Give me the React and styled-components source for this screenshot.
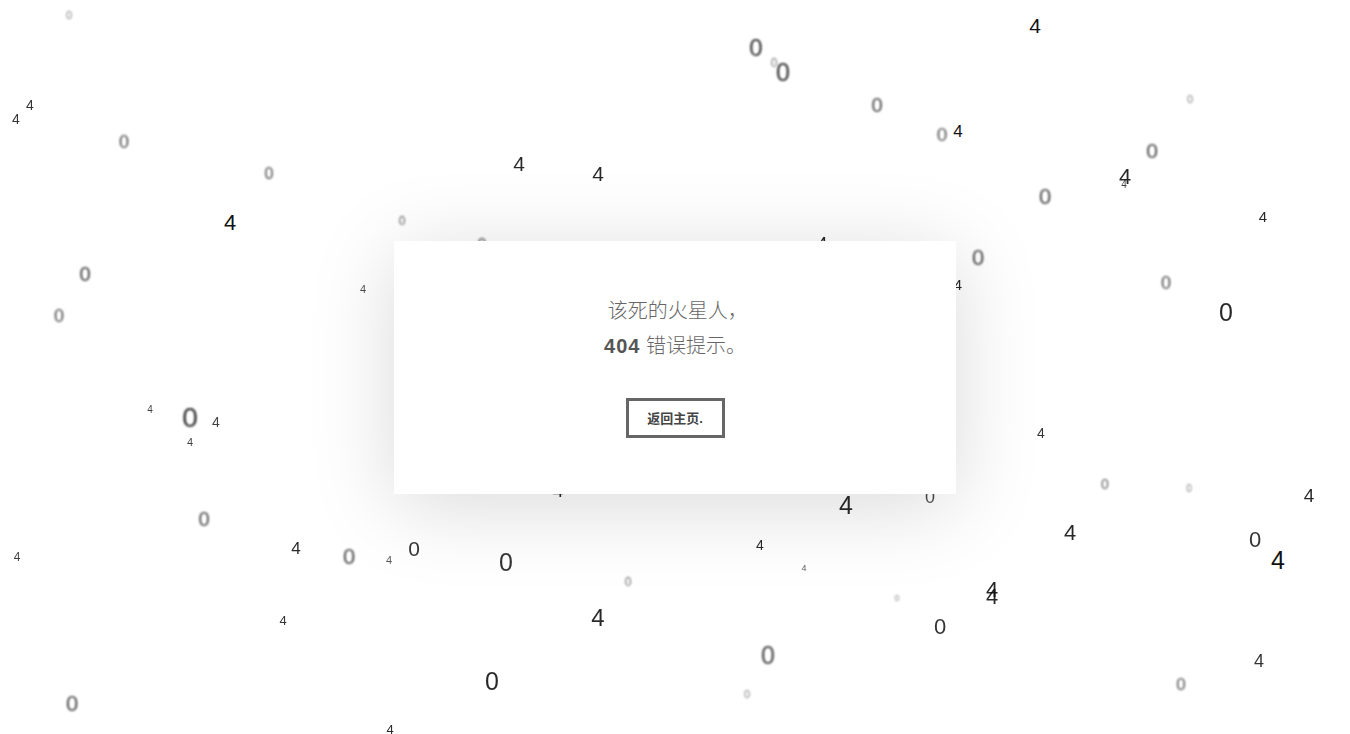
import React from 'react';
import styled, { createGlobalStyle } from 'styled-components';

const GlobalStyle = createGlobalStyle`
  html, body {
    margin: 0;
    padding: 0;
    background: #fff;
    overflow: hidden;
  }
`;

// char, x, y (centre), font size, blur, opacity
const DIGITS = [
  ['0', 69, 15, 11, 1, 0.55],
  ['4', 1035, 25, 21, 0, 1],
  ['0', 756, 48, 24, 0.8, 0.9],
  ['0', 774, 63, 12, 1, 0.6],
  ['0', 783, 72, 25, 1.2, 0.9],
  ['0', 877, 105, 20, 1.2, 0.8],
  ['0', 1190, 99, 11, 1, 0.55],
  ['4', 30, 105, 14, 0, 0.85],
  ['4', 16, 119, 14, 0, 0.85],
  ['0', 124, 142, 18, 1.2, 0.8],
  ['0', 942, 134, 19, 1.3, 0.75],
  ['4', 958, 131, 17, 0, 1],
  ['0', 1152, 150, 21, 1.2, 0.8],
  ['4', 519, 163, 21, 0, 0.9],
  ['4', 598, 173, 21, 0, 0.9],
  ['0', 269, 174, 16, 1, 0.8],
  ['4', 1125, 177, 22, 0.3, 0.9],
  ['4', 1124, 185, 10, 0.3, 0.8],
  ['0', 1045, 197, 22, 1.2, 0.8],
  ['4', 230, 223, 22, 0, 1],
  ['4', 1263, 216, 15, 0, 0.9],
  ['0', 402, 221, 12, 0.8, 0.7],
  ['4', 822, 244, 20, 0, 0.9],
  ['0', 482, 245, 16, 1, 0.8],
  ['0', 85, 274, 20, 0.8, 0.85],
  ['0', 978, 258, 22, 1.2, 0.8],
  ['0', 1166, 283, 18, 1, 0.8],
  ['0', 1226, 312, 25, 0, 0.9],
  ['4', 363, 289, 11, 0.5, 0.75],
  ['4', 958, 284, 15, 0, 0.9],
  ['0', 59, 316, 18, 1.3, 0.8],
  ['4', 150, 410, 10, 0, 0.8],
  ['0', 190, 418, 28, 1, 0.9],
  ['4', 216, 422, 14, 0, 0.8],
  ['4', 190, 442, 11, 0, 0.8],
  ['4', 1041, 433, 14, 0, 0.85],
  ['0', 1105, 484, 14, 1, 0.7],
  ['0', 1189, 489, 10, 1, 0.55],
  ['4', 1309, 495, 19, 0, 0.9],
  ['0', 204, 519, 20, 1.3, 0.8],
  ['4', 846, 505, 25, 0, 0.9],
  ['0', 930, 497, 18, 0.6, 0.75],
  ['4', 558, 490, 20, 0, 0.9],
  ['4', 296, 548, 17, 0, 0.9],
  ['0', 349, 557, 22, 1.3, 0.8],
  ['4', 389, 560, 11, 0, 0.7],
  ['0', 414, 548, 21, 0, 0.85],
  ['0', 506, 562, 25, 0, 0.85],
  ['4', 17, 557, 12, 0, 0.8],
  ['4', 760, 545, 14, 0, 0.9],
  ['4', 804, 568, 9, 0, 0.7],
  ['4', 1070, 533, 22, 0, 0.9],
  ['0', 1255, 540, 22, 0.6, 0.85],
  ['4', 1278, 560, 25, 0, 1],
  ['0', 628, 582, 12, 1, 0.65],
  ['4', 992, 590, 22, 0, 0.9],
  ['4', 992, 597, 22, 0, 0.9],
  ['0', 897, 598, 9, 1, 0.5],
  ['4', 283, 620, 13, 0, 0.85],
  ['4', 598, 618, 24, 0, 0.9],
  ['0', 940, 627, 22, 0, 0.85],
  ['0', 768, 655, 25, 1.3, 0.8],
  ['4', 1259, 661, 18, 0.3, 0.85],
  ['0', 492, 681, 25, 0, 0.9],
  ['0', 1181, 684, 17, 1, 0.75],
  ['0', 747, 694, 11, 1, 0.55],
  ['0', 72, 704, 22, 1.3, 0.8],
  ['4', 390, 729, 13, 0, 0.9],
];

const Page = styled.div`
  position: relative;
  width: 100vw;
  height: 100vh;
  display: flex;
  align-items: center;
  justify-content: center;
  font-family: "Liberation Sans", Arial, sans-serif;
`;

const Field = styled.div`
  position: absolute;
  inset: 0;
  z-index: 0;
`;

const Digit = styled.span`
  position: absolute;
  transform: translate(-50%, -50%);
  color: #111;
  line-height: 1;
  font-family: "Liberation Sans", Arial, sans-serif;
`;

const Card = styled.div`
  position: relative;
  z-index: 1;
  width: 562px;
  height: 253px;
  box-sizing: border-box;
  padding-top: 53px;
  background: #fff;
  box-shadow: 0 12px 80px rgba(0, 0, 0, 0.15);
  display: flex;
  flex-direction: column;
  align-items: center;
  color: #666;
  font-family: "Liberation Sans", "Noto Sans CJK SC", sans-serif;
`;

const Line = styled.p`
  margin: 0;
  font-size: 20px;
  line-height: 35px;
  font-weight: 300;
`;

const Code = styled.b`
  font-weight: 700;
  color: #555;
  letter-spacing: 1px;
`;

const HomeButton = styled.a`
  margin-top: 34px;
  width: 99px;
  height: 40px;
  box-sizing: border-box;
  border: 3px solid #666;
  display: flex;
  align-items: center;
  justify-content: center;
  font-size: 13px;
  font-weight: 700;
  color: #444;
  text-decoration: none;
`;

export default function App() {
  return (
    <>
      <GlobalStyle />
      <Page>
        <Field>
          {DIGITS.map(([ch, x, y, size, blur, op], i) => (
            <Digit
              key={i}
              style={{
                left: x,
                top: y,
                fontSize: size,
                opacity: op,
                filter: blur ? `blur(${blur}px)` : 'none',
              }}
            >
              {ch}
            </Digit>
          ))}
        </Field>
        <Card>
          <Line>&nbsp;该死的火星人，</Line>
          <Line><Code>404</Code> 错误提示。</Line>
          <HomeButton href="#">返回主页.</HomeButton>
        </Card>
      </Page>
    </>
  );
}
